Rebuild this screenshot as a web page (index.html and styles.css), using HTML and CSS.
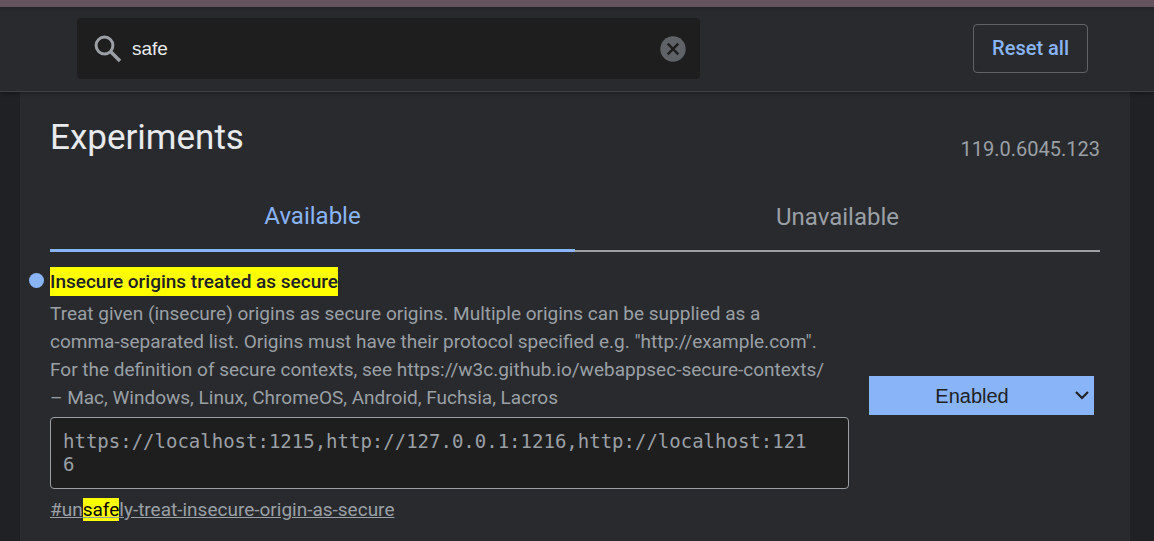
FILE: index.html
```html
<!DOCTYPE html>
<html lang="en">
<head>
<meta charset="utf-8">
<meta name="viewport" content="width=device-width, initial-scale=1">
<title>Experiments</title>
<link rel="stylesheet" href="styles.css">
</head>
<body>
<header class="toolbar">
  <div class="search">
    <svg class="search-icon" viewBox="0 0 28 28" aria-hidden="true"><circle cx="10.5" cy="10.5" r="8.4" fill="none" stroke="currentColor" stroke-width="3"/><path d="M16.5 16.5 26 26" fill="none" stroke="currentColor" stroke-width="3.6"/></svg>
    <input class="search-input" type="text" aria-label="Search flags" value="safe">
    <button class="clear" type="button" aria-label="Clear search">
      <svg class="clear-icon" viewBox="0 0 26 26" aria-hidden="true"><circle cx="13" cy="13" r="12.7" fill="#5f6368"/><path d="M7.7 7.7 18.3 18.3M18.3 7.7 7.7 18.3" stroke="#1e1e1f" stroke-width="2.5"/></svg>
    </button>
  </div>
  <button class="reset" type="button">Reset all</button>
</header>
<main class="content">
  <div class="heading">
    <h1 class="title">Experiments</h1>
    <span class="version">119.0.6045.123</span>
  </div>
  <div class="tabs" role="tablist">
    <button class="tab selected" type="button" role="tab" aria-selected="true">Available</button>
    <button class="tab" type="button" role="tab" aria-selected="false">Unavailable</button>
  </div>
  <section class="experiment">
    <div class="details">
      <h2 class="name"><mark class="match name-match">Insecure origins treated as secure</mark></h2>
      <p class="description">Treat given (insecure) origins as secure origins. Multiple origins can be supplied as a comma-separated list. Origins must have their protocol specified e.g. "http://example.com". For the definition of secure contexts, see https://w3c.github.io/webappsec-secure-contexts/ – Mac, Windows, Linux, ChromeOS, Android, Fuchsia, Lacros</p>
      <textarea class="origins" rows="2" aria-label="Insecure origins treated as secure" spellcheck="false">https://localhost:1215,http://127.0.0.1:1216,http://localhost:1216</textarea>
      <a class="permalink" href="#unsafely-treat-insecure-origin-as-secure">#un<mark class="match">safe</mark>ly-treat-insecure-origin-as-secure</a>
    </div>
    <div class="choice">
      <select class="state" aria-label="Experiment state">
        <option>Default</option>
        <option selected>Enabled</option>
        <option>Disabled</option>
      </select>
      <svg class="arrow" viewBox="0 0 14 9" aria-hidden="true"><path d="M1 1 7 7 13 1" fill="none" stroke="#202124" stroke-width="2.2"/></svg>
    </div>
  </section>
</main>
</body>
</html>
```

FILE: styles.css
```css
* {
  box-sizing: border-box;
}

body {
  margin: 0;
  min-height: 100vh;
  display: flex;
  flex-direction: column;
  background: #202124;
  color: #9aa0a6;
  font: 19px/28px Roboto, sans-serif;
}

.toolbar {
  display: flex;
  align-items: center;
  justify-content: space-between;
  padding: 11px 66px 12px 77px;
  border-top: 7px solid #65545e;
  border-bottom: 1px solid #3f4042;
  background: linear-gradient(#232427, #292a2d 6px);
  box-shadow: 0 1px 4px rgba(0, 0, 0, 0.4);
  position: relative;
}

.search {
  width: 61.6%;
  display: flex;
  align-items: center;
  gap: 10px;
  min-height: 61px;
  padding: 0 14px 0 17px;
  border-radius: 4px;
  background: #1e1e1f;
}

.search-icon {
  flex: none;
  width: 28px;
  height: 28px;
}

.search-input {
  flex: 1;
  min-width: 0;
  padding: 0;
  border: 0;
  outline: 0;
  background: none;
  color: #e8eaed;
  font: 19px/28px "Liberation Sans", sans-serif;
}

.clear {
  display: flex;
  padding: 0;
  border: 0;
  background: none;
}

.clear-icon {
  width: 26px;
  height: 26px;
}

.reset {
  padding: 9px 18px 10px;
  border: 1px solid #5f6368;
  border-radius: 4px;
  background: none;
  color: #8ab4f8;
  font: 500 20px/28px Roboto, sans-serif;
}

.content {
  flex: 1;
  margin: 0 24px 0 20px;
  padding: 21px 30px 12px;
  background: #292a2d;
}

.heading {
  display: flex;
  align-items: flex-end;
  justify-content: space-between;
}

.title {
  margin: 0;
  color: #e8eaed;
  font-size: 35px;
  font-weight: 400;
  line-height: 50px;
}

.version {
  font-size: 20px;
}

.tabs {
  display: grid;
  grid-template-columns: 1fr 1fr;
  margin-top: 20px;
}

.tab {
  height: 69px;
  padding: 0;
  border: 0;
  border-bottom: 2px solid #9aa0a6;
  background: none;
  color: #9aa0a6;
  font: 24px/28px Roboto, sans-serif;
}

.tab.selected {
  border-bottom: 3px solid #8ab4f8;
  color: #8ab4f8;
}

.experiment {
  display: grid;
  grid-template-columns: 1fr 225px;
  align-items: center;
  gap: 20px;
  padding: 15px 6px 0 0;
}

.name {
  position: relative;
  display: flex;
  margin: 0;
  font-size: 19px;
  font-weight: 500;
  line-height: 29px;
}

.name::before {
  content: "";
  position: absolute;
  top: 6px;
  left: -21px;
  width: 15px;
  height: 15px;
  border-radius: 50%;
  background: #8ab4f8;
}

.match {
  background: #ff0;
  color: #000;
}

.name-match {
  color: #202124;
}

.description {
  margin: 4px 0 5px;
  padding-right: 24px;
}

.origins {
  display: block;
  width: 100%;
  height: 72px;
  padding: 12px 36px 12px 12px;
  border: 1px solid #9aa0a6;
  border-radius: 4px;
  outline: 0;
  resize: none;
  overflow: hidden;
  background: #1e1e1f;
  color: #9aa0a6;
  font: 19px/23px "DejaVu Sans Mono", monospace;
  word-break: break-all;
}

.permalink {
  display: inline-block;
  margin-top: 7px;
  color: inherit;
}

.choice {
  position: relative;
}

.state {
  display: block;
  width: 100%;
  height: 39px;
  padding: 0 19px 0 0;
  border: 0;
  border-radius: 0;
  appearance: none;
  background: #8ab4f8;
  color: #202124;
  font: 20px/28px "Liberation Sans", sans-serif;
  text-align: center;
  text-align-last: center;
}

.arrow {
  position: absolute;
  top: 15px;
  right: 5px;
  width: 14px;
  height: 9px;
  pointer-events: none;
}
```
